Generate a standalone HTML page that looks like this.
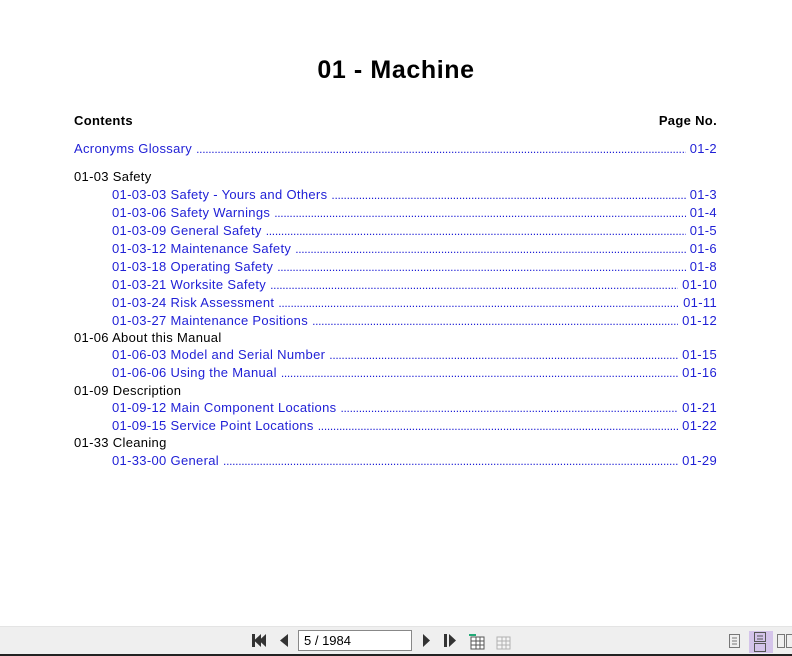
<!DOCTYPE html>
<html><head><meta charset="utf-8"><style>
body{margin:0;width:792px;height:656px;background:#fff;position:relative;overflow:hidden;font-family:"Liberation Sans",Arial,sans-serif;}
h1{position:absolute;left:0;width:792px;top:56px;margin:0;text-align:center;font-size:25px;letter-spacing:0.6px;font-weight:bold;color:#000;}
.r{position:absolute;height:18px;line-height:18px;font-size:13px;letter-spacing:0.32px;display:flex;white-space:nowrap;}
.b{color:#1f1fd6;}
.k{color:#000;}
.d{flex:1;overflow:hidden;margin:0 4px;letter-spacing:-0.3px;font-size:12px;}
.d::after{content:"..............................................................................................................................................................................................................................................";}
.tb{position:absolute;left:0;top:626px;width:792px;height:28px;background:#efefef;border-top:1px solid #e4e4e4;}
.bl{position:absolute;left:0;top:654px;width:792px;height:2px;background:#222;}
</style></head><body>
<h1>01 - Machine</h1>
<div class="r k" style="left:74px;top:112px;font-weight:bold">Contents</div>
<div class="r k" style="right:75px;top:112px;font-weight:bold">Page No.</div>
<div class="r b" style="left:74px;width:643px;top:140px"><span>Acronyms Glossary</span><span class="d"></span><span>01-2</span></div>
<div class="r k" style="left:74px;top:168px">01-03 Safety</div>
<div class="r b" style="left:112px;width:605px;top:186px"><span>01-03-03 Safety - Yours and Others</span><span class="d"></span><span>01-3</span></div>
<div class="r b" style="left:112px;width:605px;top:204px"><span>01-03-06 Safety Warnings</span><span class="d"></span><span>01-4</span></div>
<div class="r b" style="left:112px;width:605px;top:222px"><span>01-03-09 General Safety</span><span class="d"></span><span>01-5</span></div>
<div class="r b" style="left:112px;width:605px;top:240px"><span>01-03-12 Maintenance Safety</span><span class="d"></span><span>01-6</span></div>
<div class="r b" style="left:112px;width:605px;top:258px"><span>01-03-18 Operating Safety</span><span class="d"></span><span>01-8</span></div>
<div class="r b" style="left:112px;width:605px;top:276px"><span>01-03-21 Worksite Safety</span><span class="d"></span><span>01-10</span></div>
<div class="r b" style="left:112px;width:605px;top:294px"><span>01-03-24 Risk Assessment</span><span class="d"></span><span>01-11</span></div>
<div class="r b" style="left:112px;width:605px;top:312px"><span>01-03-27 Maintenance Positions</span><span class="d"></span><span>01-12</span></div>
<div class="r k" style="left:74px;top:329px">01-06 About this Manual</div>
<div class="r b" style="left:112px;width:605px;top:346px"><span>01-06-03 Model and Serial Number</span><span class="d"></span><span>01-15</span></div>
<div class="r b" style="left:112px;width:605px;top:364px"><span>01-06-06 Using the Manual</span><span class="d"></span><span>01-16</span></div>
<div class="r k" style="left:74px;top:382px">01-09 Description</div>
<div class="r b" style="left:112px;width:605px;top:399px"><span>01-09-12 Main Component Locations</span><span class="d"></span><span>01-21</span></div>
<div class="r b" style="left:112px;width:605px;top:417px"><span>01-09-15 Service Point Locations</span><span class="d"></span><span>01-22</span></div>
<div class="r k" style="left:74px;top:434px">01-33 Cleaning</div>
<div class="r b" style="left:112px;width:605px;top:452px"><span>01-33-00 General</span><span class="d"></span><span>01-29</span></div>

<div class="tb">
<svg width="792" height="28" style="position:absolute;left:0;top:0">
<g fill="#333">
<rect x="252" y="7" width="3" height="13"/><polygon points="261,7 254,13.5 261,20"/><polygon points="266,7 259,13.5 266,20"/>
<polygon points="288,7 280,13.5 288,20"/>
<polygon points="423,7 430,13.5 423,20"/>
<rect x="444" y="7" width="3" height="13"/><polygon points="449,7 456,13.5 449,20"/>
<polygon points="402,12 408,12 405,15"/>
</g>
<rect x="298.5" y="3.5" width="113" height="20" fill="#fff" stroke="#888"/>
<text x="304" y="18" font-family="Liberation Sans" font-size="13" fill="#000">5 / 1984</text>
<g transform="translate(468,5)"><rect x="3" y="5" width="13" height="12" fill="#fff" stroke="#555"/><path d="M3 9h13M3 13h13M8 5v12M12 5v12" stroke="#555"/><path d="M1 3h7" stroke="#2a7" stroke-width="2"/></g>
<g transform="translate(494,5)" opacity="0.4"><rect x="3" y="5" width="13" height="12" fill="#fff" stroke="#555"/><path d="M3 9h13M3 13h13M8 5v12M12 5v12" stroke="#555"/></g>
<g fill="none" stroke="#777">
<rect x="729.5" y="7.5" width="10" height="13"/><path d="M732 11h5M732 14h5M732 17h5"/>
</g>
<rect x="749" y="4" width="24" height="22" fill="#d4c4ea"/>
<g fill="none" stroke="#555"><rect x="754.5" y="5.5" width="11" height="9"/><rect x="754.5" y="16.5" width="11" height="8"/><path d="M757 9h6M757 12h6"/></g>
<g fill="none" stroke="#777"><rect x="777.5" y="7.5" width="7" height="13"/><rect x="786.5" y="7.5" width="7" height="13"/></g>
</svg>
</div>
<div class="bl"></div>
</body></html>
